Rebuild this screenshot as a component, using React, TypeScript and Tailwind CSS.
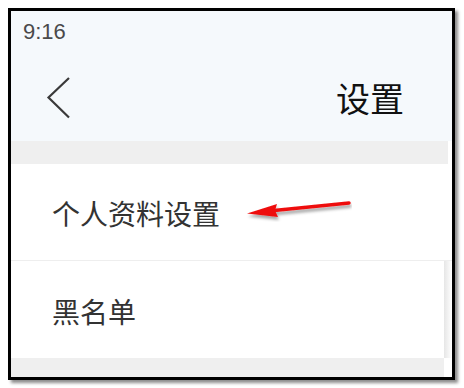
import React from "react";

export default function App() {
  return (
    <div className="w-[464px] h-[388px] bg-white pl-[8px] pt-[8px]" style={{ fontFamily: '"Noto Sans CJK SC", "Noto Sans", sans-serif' }}>
      <div className="relative w-[447px] h-[372px] border-[3px] border-black shadow-[3px_3px_3px_rgba(0,0,0,0.45)] flex flex-col overflow-visible">
        <div className="h-[130px] bg-[#f5f9fc] flex flex-col">
          <div className="pl-[12px] pt-[9px] text-[22px] leading-[24px] text-[#4a4a4a]" style={{ fontFamily: '"Liberation Sans", Arial, sans-serif' }}>9:16</div>
          <div className="flex items-center justify-between pl-[35px] pr-[48px] mt-[32px]">
            <svg width="26" height="44" viewBox="0 0 26 44">
              <path d="M23 2 L2.5 21.5 L23 41.5" fill="none" stroke="#3a3a3a" strokeWidth="2.2" />
            </svg>
            <div className="text-[34px] leading-[40px] text-[#111]">设置</div>
          </div>
        </div>
        <div className="h-[23px] bg-[#efefef] mr-[4px]" />
        <div className="h-[97px] bg-white flex items-center pl-[41px] border-b border-[#eeeeee]">
          <span className="text-[28px] leading-[32px] text-[#333] mt-[2px]">个人资料设置</span>
        </div>
        <div className="flex flex-1">
          <div className="flex-1 flex flex-col">
            <div className="h-[97px] bg-white flex items-center pl-[41px]">
              <span className="text-[28px] leading-[32px] text-[#333] mt-[3px]">黑名单</span>
            </div>
            <div className="flex-1 bg-[#efefef]" />
          </div>
          <div className="w-[8px] flex flex-col">
            <div className="h-[97px] bg-gradient-to-r from-[#e6e6e6] to-white" />
            <div className="flex-1 bg-white" />
          </div>
        </div>
        <svg className="absolute left-[221px] top-[181px]" width="120" height="30" viewBox="0 0 120 30">
          <defs>
            <filter id="sh" x="-20%" y="-50%" width="140%" height="200%">
              <feDropShadow dx="1" dy="3" stdDeviation="1.5" floodColor="#000" floodOpacity="0.35" />
            </filter>
          </defs>
          <g filter="url(#sh)">
            <path d="M117 11 L42 18.5" stroke="#ee1111" strokeWidth="3.5" strokeLinecap="round" fill="none" />
            <path d="M15 21.5 L45 12 L43 18.5 L46 25 Z" fill="#ee1111" />
          </g>
        </svg>
      </div>
    </div>
  );
}
